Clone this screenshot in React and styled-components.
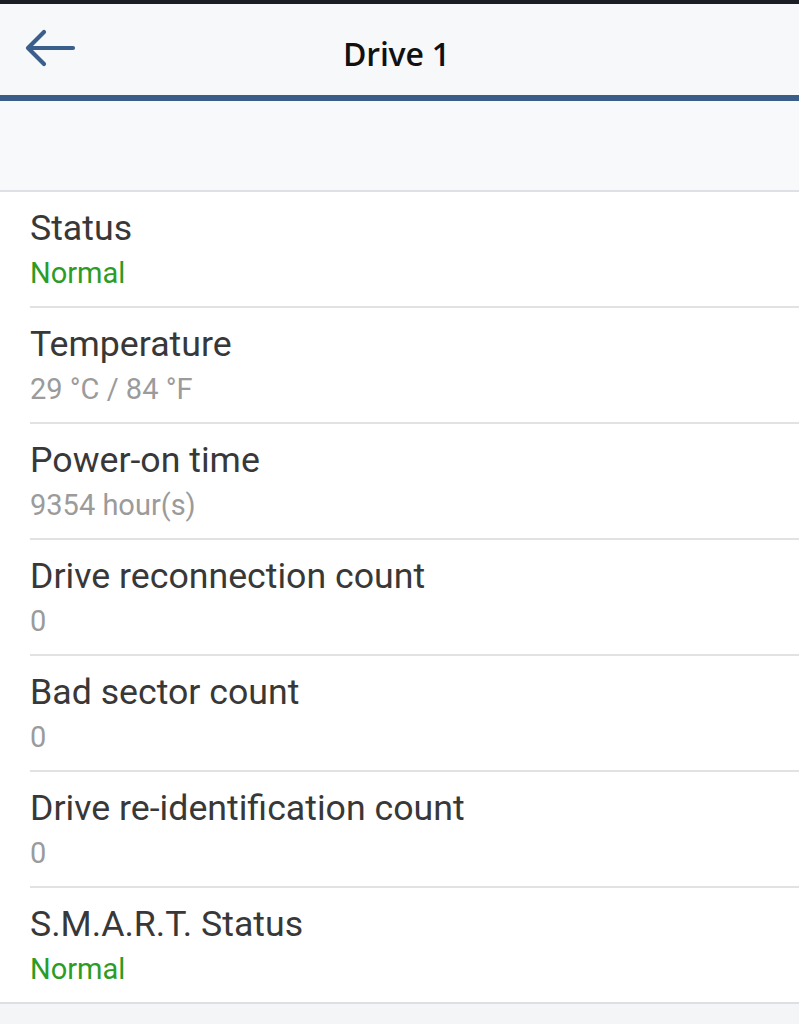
import React from "react";
import styled, { createGlobalStyle } from "styled-components";

const Global = createGlobalStyle`
  html, body { margin: 0; padding: 0; background: #f4f5f7; }
  body { font-family: Roboto, "Noto Sans", Arial, sans-serif; -webkit-font-smoothing: antialiased; }
`;

const Page = styled.div`
  width: 799px;
  min-height: 1024px;
  background: #f4f5f7;
  display: flex;
  flex-direction: column;
`;

const StatusStrip = styled.div`
  height: 4px;
  background: #1b1e25;
`;

const Header = styled.header`
  height: 91px;
  background: #f7f8fa;
  display: grid;
  grid-template-columns: 1fr auto 1fr;
  align-items: center;
  border-bottom: 6px solid #3a5e88;
  box-sizing: content-box;
`;

const BackButton = styled.button`
  justify-self: start;
  margin-left: 24px;
  margin-top: -3px;
  padding: 0;
  border: 0;
  background: transparent;
  width: 52px;
  height: 40px;
  display: flex;
  align-items: center;
  justify-content: center;
  cursor: pointer;
`;

const Title = styled.h1`
  margin: 8px 0 0 -6px;
  font-family: "Open Sans", "Noto Sans", sans-serif;
  font-weight: 600;
  font-size: 32px;
  color: #111;
  letter-spacing: -0.2px;
`;

const Spacer = styled.div`
  height: 89px;
  background: #f7f9fb;
  border-bottom: 2px solid #dde0e4;
`;

const List = styled.ul`
  list-style: none;
  margin: 0;
  padding: 0;
  background: #fff;
  border-bottom: 2px solid #dcdfe3;
`;

const Row = styled.li`
  padding: 0 0 0 30px;
`;

const RowInner = styled.div`
  padding: 15px 0 15px;
  border-bottom: ${(p) => (p.$last ? "0" : "2px solid #e2e2e2")};
  display: flex;
  flex-direction: column;
  gap: 6px;
`;

const Label = styled.div`
  font-size: 35.7px;
  line-height: 42px;
  color: #383838;
`;

const Value = styled.div`
  font-size: 29px;
  line-height: 36px;
  color: ${(p) => (p.$tone === "ok" ? "#2c9c26" : "#9b9b9b")};
`;

const BackArrow = () => (
  <svg width="52" height="40" viewBox="0 0 52 40" fill="none">
    <path
      d="M5 20 H49 M20 4 L4 20 L20 36"
      stroke="#3a5f8d"
      strokeWidth="4.2"
      strokeLinecap="round"
      strokeLinejoin="round"
    />
  </svg>
);

const items = [
  { label: "Status", value: "Normal", tone: "ok" },
  { label: "Temperature", value: "29 °C / 84 °F" },
  { label: "Power-on time", value: "9354 hour(s)" },
  { label: "Drive reconnection count", value: "0" },
  { label: "Bad sector count", value: "0" },
  { label: "Drive re-identification count", value: "0" },
  { label: "S.M.A.R.T. Status", value: "Normal", tone: "ok" },
];

export default function App() {
  return (
    <Page>
      <Global />
      <StatusStrip />
      <Header>
        <BackButton aria-label="Back">
          <BackArrow />
        </BackButton>
        <Title>Drive 1</Title>
        <div />
      </Header>
      <Spacer />
      <List>
        {items.map((it, i) => (
          <Row key={it.label}>
            <RowInner $last={i === items.length - 1}>
              <Label>{it.label}</Label>
              <Value $tone={it.tone}>{it.value}</Value>
            </RowInner>
          </Row>
        ))}
      </List>
    </Page>
  );
}
